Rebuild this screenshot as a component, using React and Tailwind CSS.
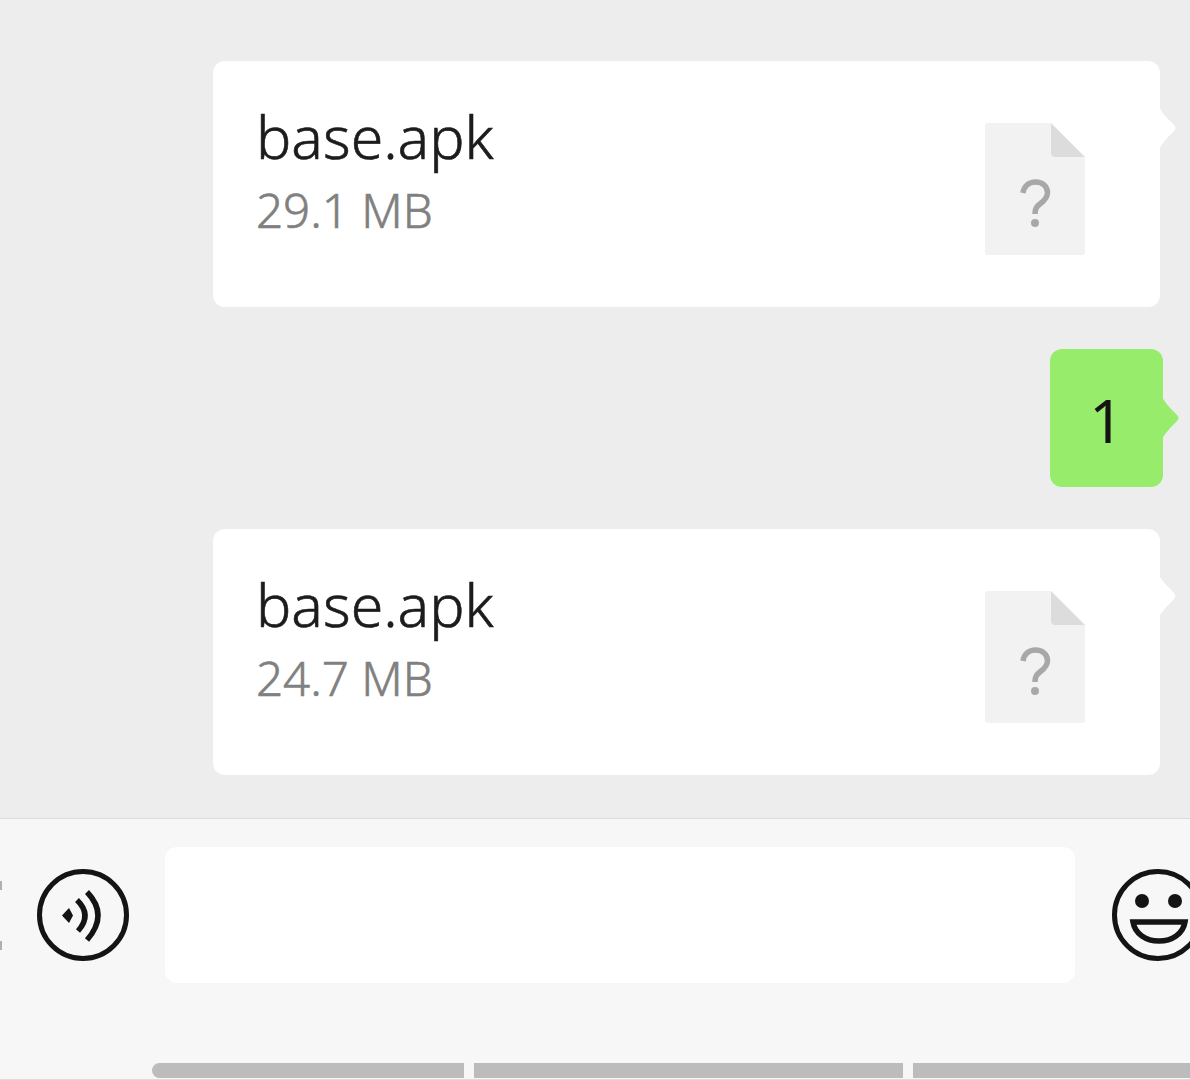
import React from "react";

const FileIcon = () => (
  <svg width="100" height="132" viewBox="0 0 100 132" className="block">
    <path d="M3 0H66V30a4 4 0 0 0 4 4H100V129a3 3 0 0 1-3 3H3a3 3 0 0 1-3-3V3a3 3 0 0 1 3-3Z" fill="#f2f2f2" />
    <path d="M66 0L100 34H70a4 4 0 0 1-4-4Z" fill="#dcdcdc" />
    <path d="M38 70c1-7 6-11 12.500-11 7 0 12 4.500 12 10.500 0 5-3 8-7 11-4 3-5.500 5-5.500 10.500" fill="none" stroke="#a8a8a8" strokeWidth="5.500" />
    <circle cx="50" cy="100" r="4" fill="#a8a8a8" />
  </svg>
);

const Tail = ({ color, className }) => (
  <svg width="20" height="44" viewBox="0 0 20 44" className={className}>
    <path d="M0 1C3 6 5 9 15 19C17 21 17 23 15 25C5 35 3 38 0 43Z" fill={color} />
  </svg>
);

const FileCard = ({ size }) => (
  <div className="relative ml-[213px] mr-[30px] flex h-[246px] items-start justify-between rounded-xl bg-white pl-[43px] pr-[75px]">
    <div className="pt-[35px]">
      <div className="text-[59px] font-light leading-[80px] text-[#1c1c1c] [-webkit-text-stroke:0.6px_#1c1c1c]">base.apk</div>
      <div className="mt-[2px] text-[47.500px] font-light leading-[64px] text-[#808080] [-webkit-text-stroke:0.6px_#808080]">{size}</div>
    </div>
    <div className="pt-[62px]">
      <FileIcon />
    </div>
    <Tail color="#ffffff" className="absolute left-full top-[45px] -ml-[1px]" />
  </div>
);

const VoiceIcon = () => (
  <svg width="92" height="92" viewBox="0 0 92 92" className="block shrink-0">
    <circle cx="46" cy="46" r="43.500" fill="none" stroke="#141414" strokeWidth="5" />
    <path d="M25 46.500L32 39L36 46.500L32 54Z" fill="#141414" />
    <path d="M40 31Q55.500 46 41 62" fill="none" stroke="#141414" strokeWidth="5.500" />
    <path d="M50 23Q72 46 50 71" fill="none" stroke="#141414" strokeWidth="5.500" />
  </svg>
);

const SmileIcon = () => (
  <svg width="92" height="92" viewBox="0 0 92 92" className="block shrink-0">
    <circle cx="46" cy="46" r="43.500" fill="none" stroke="#141414" strokeWidth="5" />
    <circle cx="30" cy="32" r="7" fill="#141414" />
    <circle cx="63" cy="32" r="7" fill="#141414" />
    <path d="M21 53H73C71 65 60 72 47 72C34 72 23 65 21 53Z" fill="none" stroke="#141414" strokeWidth="5.500" />
  </svg>
);

export default function App() {
  return (
    <div className="flex h-[1080px] w-[1190px] flex-col overflow-hidden bg-[#ededed] font-['Noto_Sans',sans-serif]">
      <div className="flex h-[818px] shrink-0 flex-col gap-[42px] pt-[61px]">
        <FileCard size="29.1 MB" />
        <div className="relative ml-auto mr-[27px] flex h-[138px] w-[113px] items-center justify-center rounded-xl bg-[#98ec6c] pt-[3px] text-[60px] font-normal text-[#141414]">
          1
          <Tail color="#98ec6c" className="absolute left-full top-[47px] -ml-[1px]" />
        </div>
        <FileCard size="24.7 MB" />
      </div>
      <div className="relative flex flex-1 flex-col border-y border-[#dcdcdc] bg-[#f7f7f7]">
        <div className="absolute left-0 top-[62px] h-[9px] w-[2px] bg-[#b0b0b0]" />
        <div className="absolute left-0 top-[122px] h-[9px] w-[2px] bg-[#b0b0b0]" />
        <div className="flex items-center pl-[37px] pt-[28px]">
          <VoiceIcon />
          <div className="ml-[36px] h-[136px] w-[910px] shrink-0 rounded-xl bg-white" />
          <div className="ml-[37px]">
            <SmileIcon />
          </div>
        </div>
        <div className="mt-auto mb-[1px] flex h-[15px] gap-[10px] pl-[152px]">
          <div className="w-[312px] rounded-l-full bg-[#bcbcbc]" />
          <div className="w-[429px] bg-[#bcbcbc]" />
          <div className="flex-1 bg-[#bcbcbc]" />
        </div>
      </div>
    </div>
  );
}
